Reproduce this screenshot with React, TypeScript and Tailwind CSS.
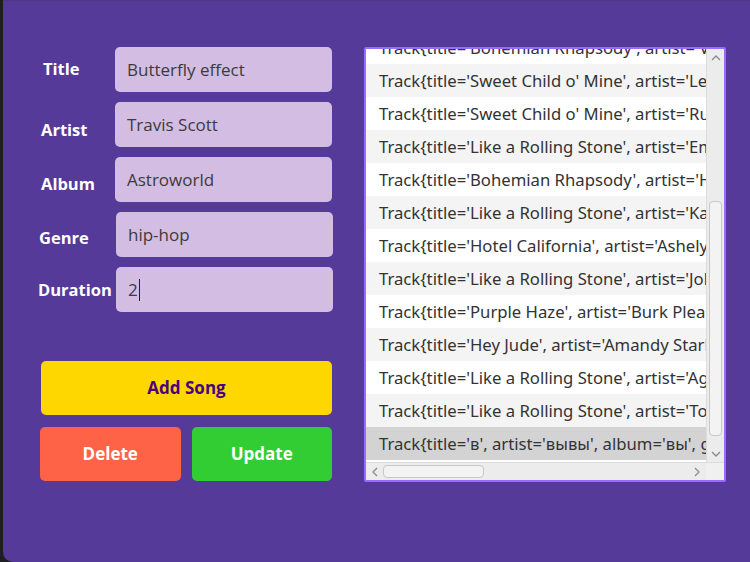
import { useState } from "react";

const tracks = [
  "Track{title='Bohemian Rhapsody', artist='Vince Hall'",
  "Track{title='Sweet Child o' Mine', artist='Leon Rivers'",
  "Track{title='Sweet Child o' Mine', artist='Ruby Lane'",
  "Track{title='Like a Rolling Stone', artist='Emma Ross'",
  "Track{title='Bohemian Rhapsody', artist='Harry Bell'",
  "Track{title='Like a Rolling Stone', artist='Kate Moor'",
  "Track{title='Hotel California', artist='Ashely Grant'",
  "Track{title='Like a Rolling Stone', artist='John Tate'",
  "Track{title='Purple Haze', artist='Burk Pleasant'",
  "Track{title='Hey Jude', artist='Amandy Stark'",
  "Track{title='Like a Rolling Stone', artist='Agnes Fox'",
  "Track{title='Like a Rolling Stone', artist='Tom Lee'",
  "Track{title='в', artist='вывы', album='вы', genre='в'",
];

const fields = [
  { label: "Title", value: "Butterfly effect", labelCls: "pl-[5px] pt-0", inputCls: "ml-0" },
  { label: "Artist", value: "Travis Scott", labelCls: "pl-[3px] pt-[11px]", inputCls: "ml-0" },
  { label: "Album", value: "Astroworld", labelCls: "pl-[3px] pt-[9px]", inputCls: "ml-0" },
  { label: "Genre", value: "hip-hop", labelCls: "pl-[1px] pt-[7px]", inputCls: "ml-px" },
  { label: "Duration", value: "2", labelCls: "pl-0 pt-px", inputCls: "ml-px" },
];

const App = () => {
  const [selected] = useState(tracks.length - 1);

  return (
    <div className="w-[750px] h-[562px] bg-[#1e1f22] pl-[3px]" style={{ fontFamily: "'Open Sans', 'Noto Sans', sans-serif" }}>
      <div className="h-full bg-[#553a9a] rounded-bl-[10px] border-t border-[#4c3a82] flex pt-[46px]">
        {/* Form */}
        <div className="w-[361px] pl-[35px] flex flex-col">
          <div className="flex flex-col gap-[10px]">
            {fields.map((f) => (
              <div key={f.label} className="flex items-center h-[45px]">
                <div className={`w-[77px] text-white font-bold text-[16.5px] ${f.labelCls}`}>{f.label}</div>
                <div className={`w-[217px] h-[45px] rounded-[5px] bg-[#d4bde3] flex items-center px-[12px] text-[17px] text-[#3b3b3b] ${f.inputCls}`}>
                  {f.value}
                  {f.label === "Duration" && <span className="w-px h-[22px] bg-[#222] ml-px" />}
                </div>
              </div>
            ))}
          </div>

          <div className="mt-[49px] pl-[3px] w-[294px] flex flex-col gap-[12px]">
            <button className="h-[54px] rounded-[5px] bg-[#ffd700] text-[#4b0082] font-bold text-[17px]">Add Song</button>
            <div className="flex gap-[11px] -ml-px">
              <button className="w-[141px] h-[54px] rounded-[5px] bg-[#ff6347] text-white font-bold text-[17px]">Delete</button>
              <button className="w-[141px] h-[54px] rounded-[5px] bg-[#32cd32] text-white font-bold text-[17px]">Update</button>
            </div>
          </div>
        </div>

        {/* Track list */}
        <div className="w-[362px] h-[435px] border-2 border-[#9a6bff] bg-white rounded-[2px] flex flex-col overflow-hidden">
          <div className="flex flex-1 min-h-0">
            <div className="flex-1 overflow-hidden">
              <div className="-mt-[18px]" style={{ fontFamily: "'Noto Sans', 'Open Sans', sans-serif" }}>
                {tracks.map((t, i) => (
                  <div
                    key={i}
                    className={`h-[33px] pl-[13px] flex items-center whitespace-nowrap text-[16.7px] text-[#333] ${
                      i === selected ? "bg-[#d3d3d3]" : i % 2 === 1 ? "bg-[#f4f4f4]" : "bg-white"
                    }`}
                  >
                    {t}
                  </div>
                ))}
              </div>
            </div>
            {/* vertical scrollbar */}
            <div className="w-[18px] bg-[#ececec] border-l border-[#dcdcdc] flex flex-col items-center">
              <svg width="12" height="12" viewBox="0 0 12 12" className="mt-[3px]">
                <path d="M2 8 L6 4 L10 8" fill="none" stroke="#8a8a8a" strokeWidth="1.3" />
              </svg>
              <div className="flex-1 w-full px-[2px] pt-[137px] pb-[12px]">
                <div className="h-full rounded-[4px] bg-[#f3f3f3] border border-[#c8c8c8]" />
              </div>
              <svg width="12" height="12" viewBox="0 0 12 12" className="mb-[2px]">
                <path d="M2 4 L6 8 L10 4" fill="none" stroke="#8a8a8a" strokeWidth="1.3" />
              </svg>
            </div>
          </div>
          {/* horizontal scrollbar */}
          <div className="h-[18px] flex bg-[#ececec] border-t border-[#dcdcdc]">
            <div className="flex-1 flex items-center">
              <svg width="12" height="12" viewBox="0 0 12 12" className="ml-[3px]">
                <path d="M8 2 L4 6 L8 10" fill="none" stroke="#8a8a8a" strokeWidth="1.3" />
              </svg>
              <div className="ml-[2px] w-[101px] h-[13px] rounded-[4px] bg-[#f3f3f3] border border-[#c8c8c8]" />
              <div className="flex-1" />
              <svg width="12" height="12" viewBox="0 0 12 12" className="mr-[3px]">
                <path d="M4 2 L8 6 L4 10" fill="none" stroke="#8a8a8a" strokeWidth="1.3" />
              </svg>
            </div>
            <div className="w-[18px] bg-[#f0f0f0]" />
          </div>
        </div>
      </div>
    </div>
  );
};

export default App;
